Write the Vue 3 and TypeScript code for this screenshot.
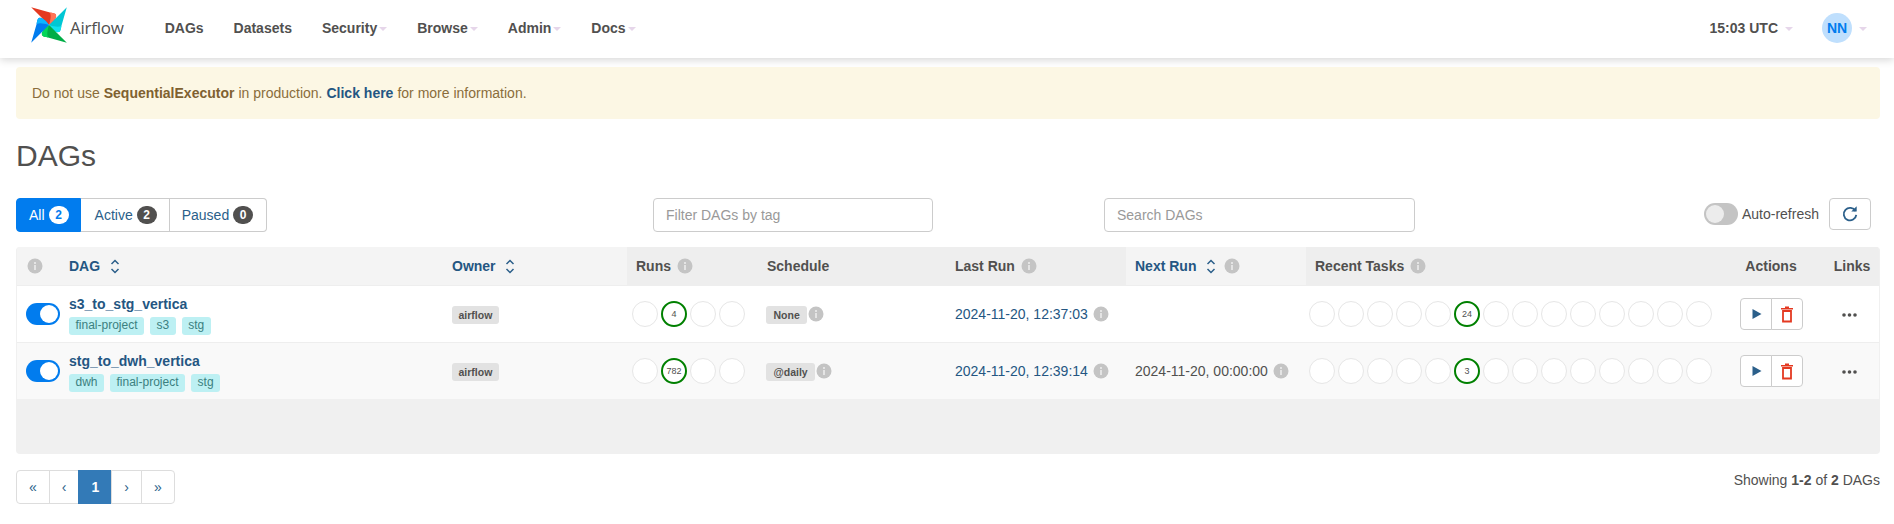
<script setup lang="ts">
interface Dag {
  name: string
  tags: string[]
  schedule: string
  lastRun: string
  nextRun: string
  runs: string[]
  tasks: string[]
}

const navItems = [
  { label: 'DAGs', caret: false },
  { label: 'Datasets', caret: false },
  { label: 'Security', caret: true },
  { label: 'Browse', caret: true },
  { label: 'Admin', caret: true },
  { label: 'Docs', caret: true },
]

const filters = [
  { label: 'All', count: 2, active: true },
  { label: 'Active', count: 2, active: false },
  { label: 'Paused', count: 0, active: false },
]

const slots = (size: number, at: number, value: string) =>
  Array.from({ length: size }, (_, i) => (i === at ? value : ''))

const dags: Dag[] = [
  {
    name: 's3_to_stg_vertica',
    tags: ['final-project', 's3', 'stg'],
    schedule: 'None',
    lastRun: '2024-11-20, 12:37:03',
    nextRun: '',
    runs: slots(4, 1, '4'),
    tasks: slots(14, 5, '24'),
  },
  {
    name: 'stg_to_dwh_vertica',
    tags: ['dwh', 'final-project', 'stg'],
    schedule: '@daily',
    lastRun: '2024-11-20, 12:39:14',
    nextRun: '2024-11-20, 00:00:00',
    runs: slots(4, 1, '782'),
    tasks: slots(14, 5, '3'),
  },
]

const pages = ['«', '‹', '1', '›', '»']

const bladeAngles = [0, 90, 180, 270]
const bladeColors = [
  ['#e43921', '#ff7557'],
  ['#00c7d4', '#11e1ee'],
  ['#00ad46', '#04d659'],
  ['#017cee', '#0cb6ff'],
]
</script>

<template>
  <nav class="navbar">
    <div class="brand">
      <svg class="logo" viewBox="0 0 36 36" width="36" height="36">
        <g v-for="(angle, i) in bladeAngles" :key="angle" :transform="`rotate(${angle} 18 18)`">
          <path d="M0.2 0.2 L18 18 C21.5 15.5 26 11.5 25 8 C24.4 6.2 21 6 19 5.6 Z" :fill="bladeColors[i][0]" />
          <path d="M18 18 C21.5 15.5 26 11.5 25 8 C24.4 6.2 21 6 19 5.6 C20.5 9 19.5 13 18 18 Z" :fill="bladeColors[i][1]" />
        </g>
      </svg>
      <span class="wordmark">Airflow</span>
    </div>
    <ul class="nav-links">
      <li v-for="item in navItems" :key="item.label">
        {{ item.label }}<i v-if="item.caret" class="caret"></i>
      </li>
    </ul>
    <div class="nav-right">
      <span class="clock">15:03 UTC</span><i class="caret clock-caret"></i>
      <span class="avatar">NN</span><i class="caret avatar-caret"></i>
    </div>
  </nav>

  <main class="page">
    <div class="alert">
      Do not use <strong>SequentialExecutor</strong> in production.
      <a class="alert-link">Click here</a> for more information.
    </div>

    <h1>DAGs</h1>

    <div class="toolbar">
      <div class="btn-group">
        <button v-for="f in filters" :key="f.label" :class="['filter', { active: f.active }]">
          {{ f.label }}<span class="count">{{ f.count }}</span>
        </button>
      </div>
      <input class="field tag-field" placeholder="Filter DAGs by tag" />
      <input class="field search-field" placeholder="Search DAGs" />
      <div class="refresh">
        <span class="switch off"><span class="knob"></span></span>
        <span class="refresh-label">Auto-refresh</span>
        <button class="refresh-btn">
          <svg viewBox="0 0 24 24" width="20" height="20">
            <path d="M18.6 8.5 A7.5 7.5 0 1 0 19.5 13" fill="none" stroke="#2b5f8a" stroke-width="2.2" />
            <path d="M13.5 9 H20 V2.8 Z" fill="#2b5f8a" />
          </svg>
        </button>
      </div>
    </div>

    <div class="table-wrap">
      <table>
        <colgroup>
          <col style="width: 43px" />
          <col style="width: 384px" />
          <col style="width: 183px" />
          <col style="width: 131px" />
          <col style="width: 188px" />
          <col style="width: 180px" />
          <col style="width: 180px" />
          <col style="width: 421px" />
          <col style="width: 88px" />
          <col />
        </colgroup>
        <thead>
          <tr>
            <th class="sortable first-head">
              <svg class="info" viewBox="0 0 16 16" width="16" height="16">
                <circle cx="8" cy="8" r="7.5" fill="#c4c4c4" />
                <path d="M7 7h2v5H7zM7 4h2v2H7z" fill="#e4e4e4" />
              </svg>
            </th>
            <th class="sortable link">
              DAG
              <svg class="sort" viewBox="0 0 10 15" width="10" height="15">
                <path d="M1.5 5 L5 1.5 L8.5 5 M1.5 10 L5 13.5 L8.5 10" fill="none" stroke="#2b5f8a" stroke-width="1.5" />
              </svg>
            </th>
            <th class="sortable link owner-head">
              Owner
              <svg class="sort" viewBox="0 0 10 15" width="10" height="15">
                <path d="M1.5 5 L5 1.5 L8.5 5 M1.5 10 L5 13.5 L8.5 10" fill="none" stroke="#2b5f8a" stroke-width="1.5" />
              </svg>
            </th>
            <th>
              Runs
              <svg class="info" viewBox="0 0 16 16" width="16" height="16">
                <circle cx="8" cy="8" r="7.5" fill="#c4c4c4" />
                <path d="M7 7h2v5H7zM7 4h2v2H7z" fill="#e4e4e4" />
              </svg>
            </th>
            <th>Schedule</th>
            <th>
              Last Run
              <svg class="info" viewBox="0 0 16 16" width="16" height="16">
                <circle cx="8" cy="8" r="7.5" fill="#c4c4c4" />
                <path d="M7 7h2v5H7zM7 4h2v2H7z" fill="#e4e4e4" />
              </svg>
            </th>
            <th class="sortable link">
              Next Run
              <svg class="sort" viewBox="0 0 10 15" width="10" height="15">
                <path d="M1.5 5 L5 1.5 L8.5 5 M1.5 10 L5 13.5 L8.5 10" fill="none" stroke="#2b5f8a" stroke-width="1.5" />
              </svg>
              <svg class="info gap" viewBox="0 0 16 16" width="16" height="16">
                <circle cx="8" cy="8" r="7.5" fill="#c4c4c4" />
                <path d="M7 7h2v5H7zM7 4h2v2H7z" fill="#e4e4e4" />
              </svg>
            </th>
            <th>
              Recent Tasks
              <svg class="info" viewBox="0 0 16 16" width="16" height="16">
                <circle cx="8" cy="8" r="7.5" fill="#c4c4c4" />
                <path d="M7 7h2v5H7zM7 4h2v2H7z" fill="#e4e4e4" />
              </svg>
            </th>
            <th class="center">Actions</th>
            <th class="center links-head">Links</th>
          </tr>
        </thead>
        <tbody>
          <tr v-for="dag in dags" :key="dag.name">
            <td class="toggle-cell">
              <span class="switch on"><span class="knob"></span></span>
            </td>
            <td>
              <div class="dag-name">{{ dag.name }}</div>
              <div class="tags">
                <span v-for="tag in dag.tags" :key="tag" class="tag">{{ tag }}</span>
              </div>
            </td>
            <td><span class="label owner">airflow</span></td>
            <td class="states-cell runs-cell">
              <div class="states">
                <span v-for="(n, i) in dag.runs" :key="i" :class="['state', { success: n }]">{{ n }}</span>
              </div>
            </td>
            <td>
              <span class="label schedule">{{ dag.schedule }}</span>
              <svg class="info tight" viewBox="0 0 16 16" width="16" height="16">
                <circle cx="8" cy="8" r="7.5" fill="#c4c4c4" />
                <path d="M7 7h2v5H7zM7 4h2v2H7z" fill="#e4e4e4" />
              </svg>
            </td>
            <td class="run-link">
              {{ dag.lastRun }}
              <svg class="info near" viewBox="0 0 16 16" width="16" height="16">
                <circle cx="8" cy="8" r="7.5" fill="#c4c4c4" />
                <path d="M7 7h2v5H7zM7 4h2v2H7z" fill="#e4e4e4" />
              </svg>
            </td>
            <td>
              <template v-if="dag.nextRun">
                {{ dag.nextRun }}
                <svg class="info near" viewBox="0 0 16 16" width="16" height="16">
                  <circle cx="8" cy="8" r="7.5" fill="#c4c4c4" />
                  <path d="M7 7h2v5H7zM7 4h2v2H7z" fill="#e4e4e4" />
                </svg>
              </template>
            </td>
            <td class="states-cell tasks-cell">
              <div class="states">
                <span v-for="(n, i) in dag.tasks" :key="i" :class="['state', { success: n }]">{{ n }}</span>
              </div>
            </td>
            <td class="center">
              <div class="actions">
                <button class="action">
                  <svg class="play" viewBox="0 0 10 12" width="10" height="12"><path d="M0.5 1 L9.5 6 L0.5 11 Z" fill="#2b5f8a" /></svg>
                </button>
                <button class="action">
                  <svg viewBox="0 0 12 17" width="12" height="17">
                    <path d="M4 0.5 H8 V2 H12 V3.6 H0 V2 H4 Z" fill="#e43921" />
                    <path d="M2 5 H10 V15.5 H2 Z" fill="none" stroke="#e43921" stroke-width="1.8" />
                  </svg>
                </button>
              </div>
            </td>
            <td class="center dots-cell">
              <svg class="dots" viewBox="0 0 15 4" width="15" height="4">
                <circle cx="2" cy="2" r="1.8" fill="#51504f" />
                <circle cx="7.5" cy="2" r="1.8" fill="#51504f" />
                <circle cx="13" cy="2" r="1.8" fill="#51504f" />
              </svg>
            </td>
          </tr>
        </tbody>
      </table>
      <div class="filler"></div>
    </div>

    <div class="footer">
      <ul class="pagination">
        <li v-for="p in pages" :key="p" :class="{ current: p === '1' }">{{ p }}</li>
      </ul>
      <span class="showing">Showing <b>1-2</b> of <b>2</b> DAGs</span>
    </div>
  </main>
</template>

<style scoped>
.navbar {
  display: flex;
  align-items: center;
  box-sizing: border-box;
  height: 58px;
  padding-bottom: 2px;
  background: #fff;
  box-shadow: 0 2px 8px rgba(0, 0, 0, 0.16);
  color: #51504f;
  font-weight: bold;
}
.brand {
  display: flex;
  align-items: center;
  margin-left: 31px;
  margin-top: -6px;
}
.logo {
  display: block;
}
.wordmark {
  margin-left: 3px;
  margin-top: 4px;
  font-family: "Open Sans", sans-serif;
  font-size: 17px;
  font-weight: 400;
  letter-spacing: -0.25px;
}
.nav-links {
  display: flex;
  list-style: none;
  margin: 0 0 0 41px;
  padding: 0;
  gap: 30px;
}
.nav-links li {
  display: flex;
  align-items: center;
}
.caret {
  display: inline-block;
  width: 0;
  height: 0;
  margin-left: 2px;
  margin-top: 2px;
  border-left: 4px solid transparent;
  border-right: 4px solid transparent;
  border-top: 4px solid #e6d6ea;
}
.nav-right {
  display: flex;
  align-items: center;
  margin-left: auto;
  margin-right: 27px;
}
.clock-caret {
  margin-left: 7px;
}
.avatar {
  display: flex;
  align-items: center;
  justify-content: center;
  width: 30px;
  height: 30px;
  margin-left: 29px;
  border-radius: 50%;
  background: #bfdffd;
  color: #017cee;
}
.avatar-caret {
  margin-left: 7px;
}
.page {
  padding: 9px 14px 0 16px;
}
.alert {
  display: flex;
  gap: 4px;
  height: 52px;
  align-items: center;
  padding-left: 16px;
  border-radius: 4px;
  background: #fcf7e4;
  color: #8a6d3b;
}
.alert strong {
  color: #7f6130;
}
.alert-link {
  color: #245682;
  font-weight: bold;
}
h1 {
  margin: 20px 0 26px;
  font-size: 30px;
  font-weight: 400;
  line-height: 33px;
  color: #51504f;
}
.toolbar {
  display: flex;
  align-items: flex-start;
  height: 34px;
  margin-bottom: 15px;
}
.btn-group {
  display: flex;
  width: 251px;
  height: 34px;
}
.filter {
  display: flex;
  align-items: center;
  padding: 0 11px 0 12px;
  border: 1px solid #ccc;
  border-left-width: 0;
  background: #fff;
  color: #2b5f8a;
  font: 14px "Liberation Sans", Arial, sans-serif;
}
.filter:nth-child(2) {
  padding: 0 12px 0 14px;
}
.filter:last-child {
  border-radius: 0 4px 4px 0;
  flex: 1;
}
.filter.active {
  border: 1px solid #017cee;
  border-radius: 4px 0 0 4px;
  background: #017cee;
  color: #fff;
}
.count {
  display: inline-block;
  min-width: 20px;
  height: 18px;
  margin-left: 4px;
  border-radius: 10px;
  background: #51504f;
  color: #fff;
  font-size: 12px;
  font-weight: bold;
  line-height: 18px;
  text-align: center;
}
.filter.active .count {
  background: #fff;
  color: #017cee;
}
.field {
  box-sizing: border-box;
  height: 34px;
  padding: 6px 12px;
  border: 1px solid #ccc;
  border-radius: 4px;
  background: #fff;
  color: #51504f;
  font: 14px "Liberation Sans", Arial, sans-serif;
}
.field::placeholder {
  color: #999;
}
.tag-field {
  width: 280px;
  margin-left: 386px;
}
.search-field {
  width: 311px;
  margin-left: 171px;
}
.refresh {
  display: flex;
  align-items: center;
  margin-left: auto;
  margin-right: 9px;
  height: 31px;
}
.refresh-label {
  margin-left: 4px;
}
.refresh-btn {
  display: flex;
  align-items: center;
  justify-content: center;
  width: 42px;
  height: 32px;
  margin-left: 10px;
  padding: 0;
  border: 1px solid #ccc;
  border-radius: 4px;
  background: #fff;
}
.switch {
  display: inline-block;
  position: relative;
  width: 34px;
  height: 22px;
  border-radius: 11px;
  background: #c4c4c4;
  vertical-align: middle;
}
.knob {
  position: absolute;
  top: 2px;
  left: 2px;
  width: 18px;
  height: 18px;
  border-radius: 50%;
  background: #ececec;
}
.switch.on {
  background: #017cee;
}
.switch.on .knob {
  left: 14px;
  background: #fff;
}
.table-wrap {
  border: 1px solid #f0f0f0;
  border-top: 0;
  border-radius: 4px;
  background: #f0f0f0;
  overflow: hidden;
}
table {
  width: 100%;
  table-layout: fixed;
  border-collapse: collapse;
}
th {
  height: 38px;
  padding: 0 0 0 9px;
  background: #eee;
  color: #51504f;
  font-size: 14px;
  text-align: left;
  white-space: nowrap;
}
th.sortable {
  background: #f4f4f4;
}
th.link {
  color: #245682;
}
th.first-head {
  padding-left: 10px;
}
th.owner-head {
  padding-left: 8px;
}
td {
  height: 56px;
  padding: 0 0 0 9px;
  border-top: 1px solid #eee;
  background: #fff;
  color: #51504f;
  white-space: nowrap;
}
tbody tr:nth-child(2) td {
  background: #f9f9f9;
}
td.toggle-cell {
  padding-left: 9px;
}
.center,
th.center,
td.center {
  padding-left: 0;
  text-align: center;
}
th.links-head {
  padding-left: 10px;
}
td.dots-cell {
  padding-left: 4px;
}
.sort {
  margin-left: 6px;
  vertical-align: -3px;
}
.info {
  margin-left: 2px;
  vertical-align: -3px;
}
.info.gap {
  margin-left: 8px;
}
.info.near {
  margin-left: 1px;
}
.info.tight {
  margin-left: 1px;
  vertical-align: -3px;
}
.first-head .info {
  margin-left: 0;
}
.dag-name {
  margin-top: 2px;
  color: #245682;
  font-size: 14px;
  font-weight: bold;
  line-height: 18px;
}
.tags {
  display: flex;
  gap: 6px;
  margin-top: 4px;
}
.tag {
  height: 18px;
  padding: 0 6.5px;
  border-radius: 3px;
  background: #bdf0f3;
  color: #3b8080;
  font-size: 12px;
  line-height: 17px;
}
.label {
  display: inline-block;
  height: 18px;
  margin-top: 2px;
  padding: 0 6.5px;
  border-radius: 3px;
  background: #e2e2e2;
  color: #51504f;
  font-size: 10.5px;
  font-weight: bold;
  line-height: 18px;
}
.label.owner {
  margin-left: -1px;
}
.label.schedule {
  margin-left: -1px;
  padding: 0 7.5px;
}
.run-link {
  color: #245682;
}
td.runs-cell {
  padding-left: 5px;
}
td.tasks-cell {
  padding-left: 3px;
}
.states {
  display: flex;
  gap: 3px;
}
.state {
  display: flex;
  align-items: center;
  justify-content: center;
  box-sizing: border-box;
  width: 26px;
  height: 26px;
  border: 1.5px solid #e6e6e6;
  border-radius: 50%;
  background: #fff;
  color: #51504f;
  font-size: 9px;
}
.state.success {
  border: 2px solid #008000;
}
.actions {
  display: inline-flex;
  vertical-align: middle;
}
.action {
  display: flex;
  align-items: center;
  justify-content: center;
  width: 32px;
  height: 32px;
  padding: 0;
  border: 1px solid #ccc;
  background: #fff;
}
.action:first-child {
  border-radius: 4px 0 0 4px;
}
.action:last-child {
  margin-left: -1px;
  border-radius: 0 4px 4px 0;
}
.play {
  margin-left: 3px;
}
.dots {
  vertical-align: 2px;
}
.filler {
  height: 54px;
}
.footer {
  display: flex;
  justify-content: space-between;
  margin-top: 16px;
}
.pagination {
  display: flex;
  list-style: none;
  margin: 0;
  padding: 0;
}
.pagination li {
  box-sizing: border-box;
  height: 34px;
  padding: 0 12px;
  border: 1px solid #ddd;
  margin-left: -1px;
  background: #fff;
  color: #2b5f8a;
  line-height: 32px;
  text-align: center;
}
.pagination li:first-child {
  margin-left: 0;
  border-radius: 4px 0 0 4px;
}
.pagination li:last-child {
  border-radius: 0 4px 4px 0;
}
.pagination li.current {
  border-color: #337ab7;
  background: #337ab7;
  color: #fff;
  font-weight: bold;
}
.showing {
  margin-top: 2px;
  color: #51504f;
}
</style>

<style>
body {
  background: #fff;
  color: #51504f;
  font: 14px "Liberation Sans", Arial, sans-serif;
}
</style>
